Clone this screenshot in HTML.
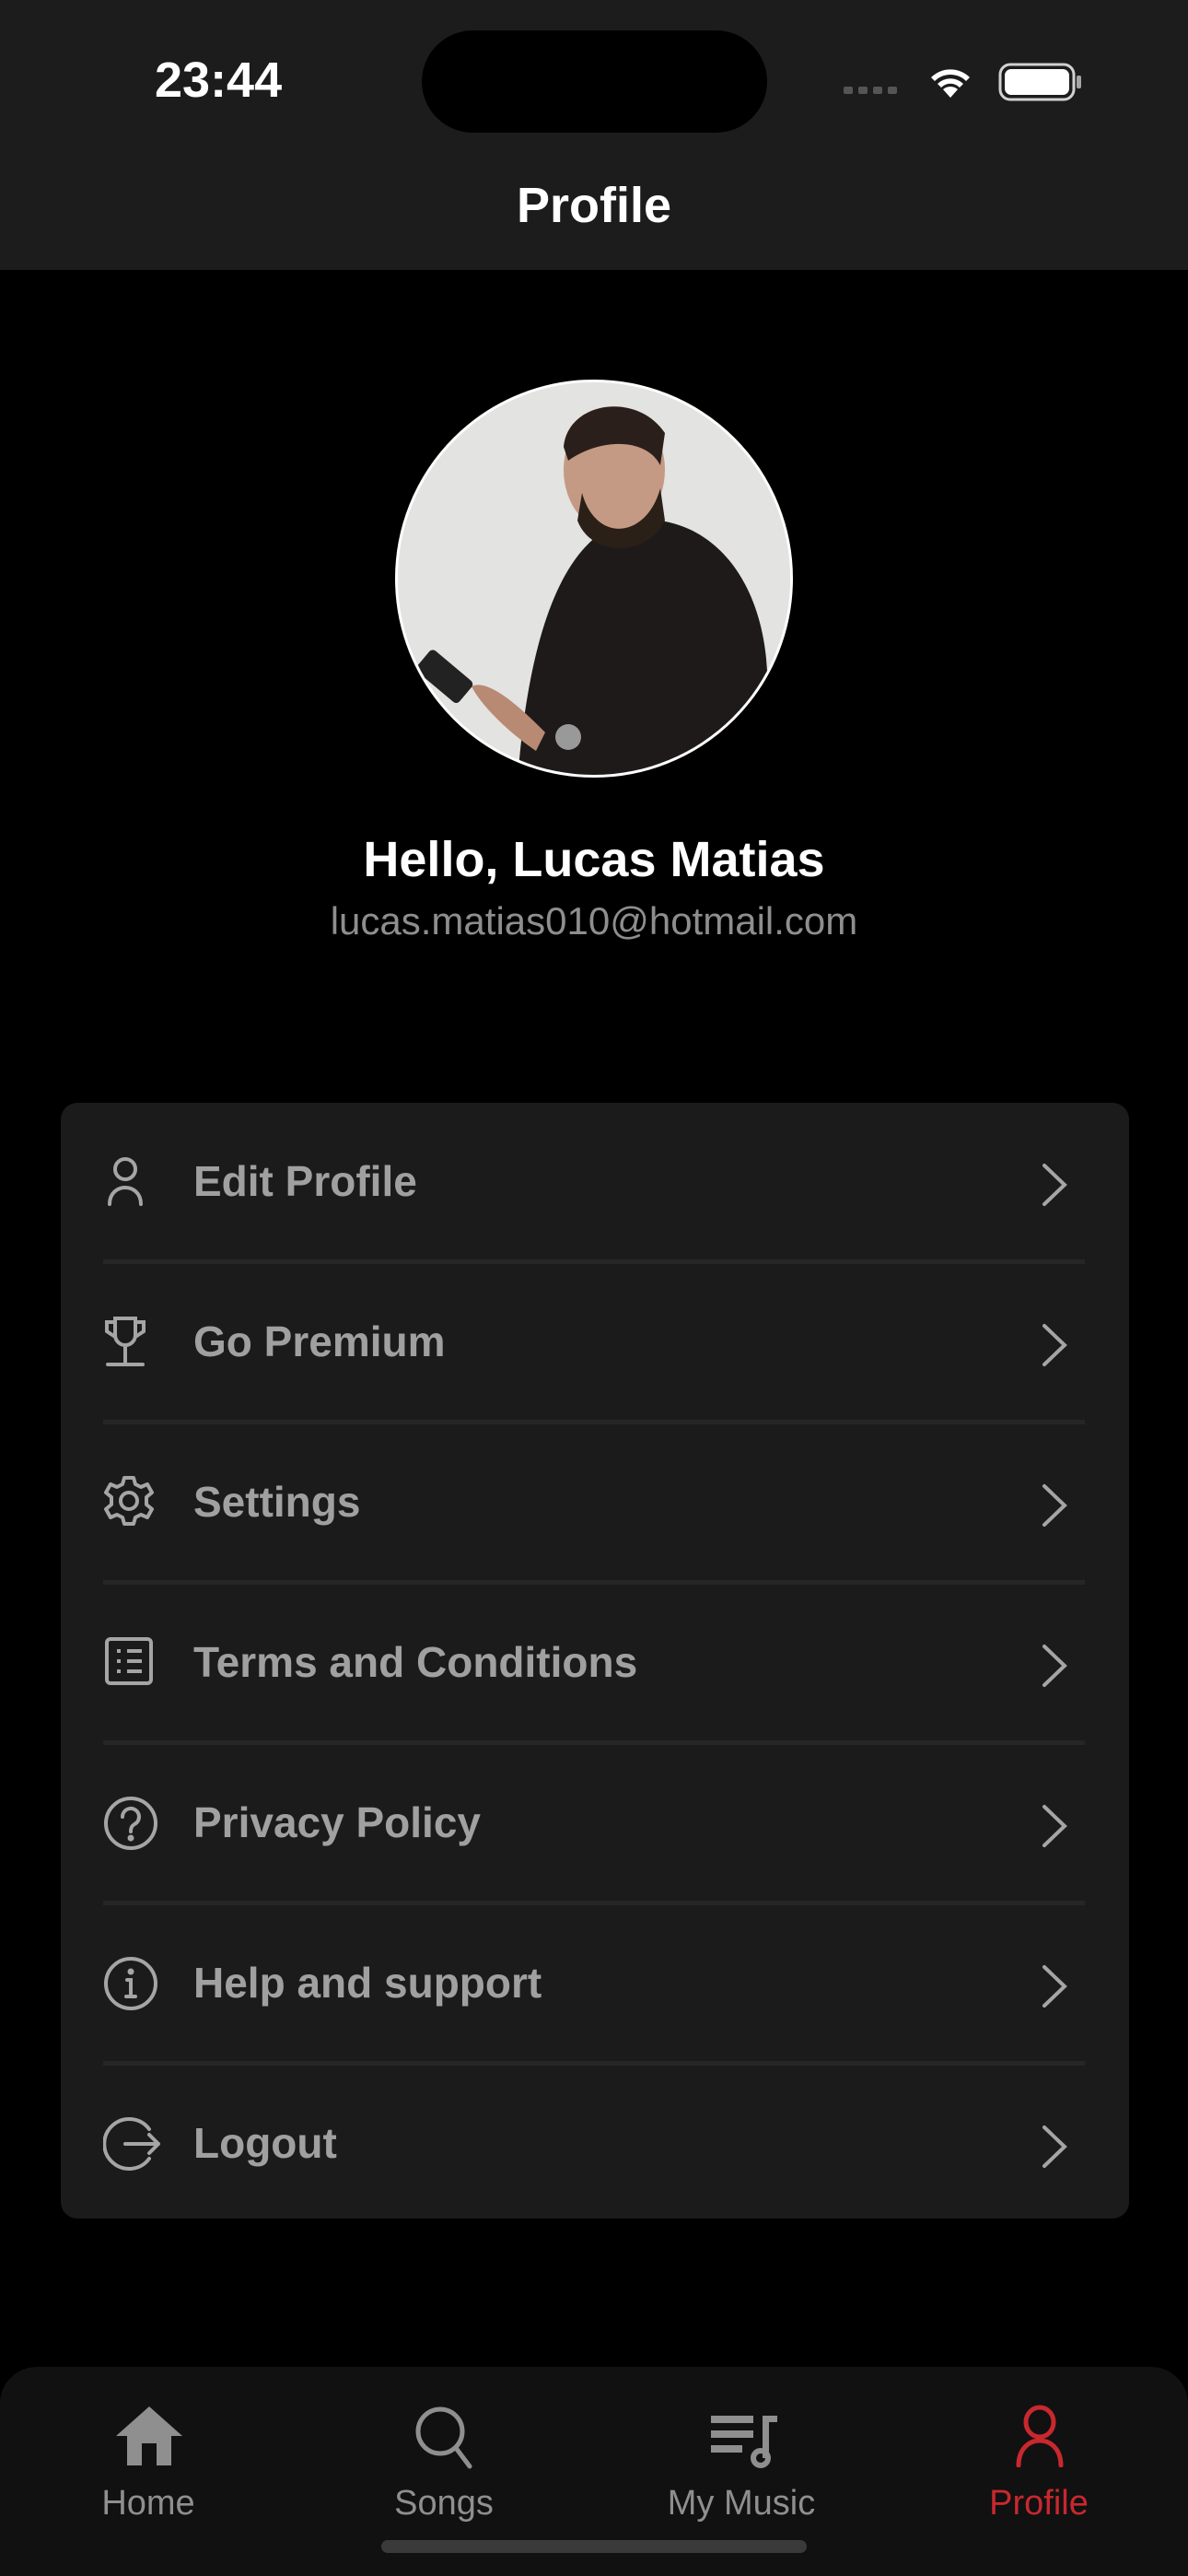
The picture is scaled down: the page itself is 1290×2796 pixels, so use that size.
<!DOCTYPE html>
<html><head><meta charset="utf-8"><style>
*{margin:0;padding:0;box-sizing:border-box}
body{width:1290px;height:2796px;background:#000;font-family:"Liberation Sans",sans-serif;position:relative;overflow:hidden;color:#fff}
.hdr{position:absolute;left:0;top:0;width:1290px;height:293px;background:#1c1c1c}
.time{position:absolute;left:168px;top:56px;font-size:54px;font-weight:bold}
.island{position:absolute;left:458px;top:33px;width:375px;height:111px;border-radius:56px;background:#000}
.title{position:absolute;left:0;width:1290px;top:192px;text-align:center;font-size:54px;font-weight:bold}
.av{position:absolute;left:429px;top:412px;width:432px;height:432px;border-radius:50%;border:3px solid #fff;overflow:hidden;background:#dedede}
.name{position:absolute;top:902px;width:1290px;text-align:center;font-size:54px;font-weight:bold}
.mail{position:absolute;top:976px;width:1290px;text-align:center;font-size:42px;color:#8e8e8e}
.card{position:absolute;left:66px;top:1197px;width:1160px;height:1211px;border-radius:18px;background:#1b1b1b}
.row{position:absolute;left:0;width:1160px;height:174px}
.row .t{position:absolute;left:144px;top:58px;font-size:46px;color:#a0a0a0;font-weight:bold}
.row svg.i{position:absolute;left:46px;top:56px}
.row svg.c{position:absolute;left:1060px;top:64px}
.div{position:absolute;left:46px;width:1066px;height:5px;background:#262626}
.tab{position:absolute;left:0;top:2569px;width:1290px;height:227px;background:#111;border-radius:40px 40px 0 0}
.lbl{position:absolute;top:2696px;font-size:38px;color:#8f8f8f;text-align:center;width:240px}
.bar{position:absolute;left:414px;top:2757px;width:462px;height:14px;border-radius:7px;background:#3a3a3a}
</style></head><body>
<div class="hdr"></div>
<div class="time">23:44</div>
<div class="island"></div>
<svg style="position:absolute;left:912px;top:64px" width="270" height="50" viewBox="0 0 270 50">
<g fill="#555"><rect x="4" y="30" width="10" height="8" rx="2"/><rect x="20" y="30" width="10" height="8" rx="2"/><rect x="36" y="30" width="10" height="8" rx="2"/><rect x="52" y="30" width="10" height="8" rx="2"/></g>
<g fill="#fff"><path d="M120 42 l-8 -9 a12 12 0 0 1 16 0z"/><path d="M106 27 a20 20 0 0 1 28 0 l-4 4 a14 14 0 0 0 -20 0z"/><path d="M99 20 a30 30 0 0 1 42 0 l-4 4 a24 24 0 0 0 -34 0z"/></g>
<rect x="174" y="6" width="80" height="38" rx="11" fill="none" stroke="#fff" stroke-width="3" opacity=".8"/>
<rect x="179" y="11" width="70" height="28" rx="7" fill="#fff"/><rect x="257" y="18" width="5" height="14" rx="2" fill="#fff" opacity=".6"/>
</svg>
<div class="title">Profile</div>
<div class="av"><svg width="432" height="432" viewBox="0 0 432 432">
<rect width="432" height="432" fill="#e3e3e1"/>
<path d="M130 432 C140 300 170 170 250 150 C330 140 390 200 400 300 L410 432Z" fill="#1f1a1a"/>
<ellipse cx="235" cy="95" rx="55" ry="68" fill="#c49a84"/>
<path d="M180 70 C185 20 260 10 290 55 L285 90 C270 60 220 60 185 85Z" fill="#2a1f1a"/>
<path d="M200 120 C215 175 270 170 285 115 L290 150 C270 190 210 190 195 150Z" fill="#2b2018"/>
<path d="M80 330 C100 320 140 360 160 380 L150 400 C120 380 90 350 80 330Z" fill="#b88a73"/>
<rect x="36" y="290" width="30" height="60" rx="5" transform="rotate(-50 50 320)" fill="#222"/>
<circle cx="185" cy="385" r="14" fill="#999"/>
</svg></div>
<div class="name">Hello, Lucas Matias</div>
<div class="mail">lucas.matias010@hotmail.com</div>
<div class="card">
<div class="row" style="top:0"><svg class="i" width="60" height="60" viewBox="0 0 60 60" fill="none" stroke="#a5a5a5" stroke-width="4" stroke-linecap="round"><circle cx="24" cy="16" r="11"/><path d="M7 54 C7 30 41 30 41 54"/></svg><div class="t">Edit Profile</div><svg class="c" width="40" height="50" viewBox="0 0 40 50" fill="none" stroke="#a5a5a5" stroke-width="4" stroke-linecap="round"><path d="M8 4 L30 25 L8 46"/></svg></div>
<div class="div" style="top:170px"></div>
<div class="row" style="top:174px"><svg class="i" width="60" height="60" viewBox="0 0 60 60" fill="none" stroke="#a5a5a5" stroke-width="4" stroke-linecap="round"><path d="M13 4 H35 V22 A11 11 0 0 1 13 22Z M13 8 H4 V18 L13 24 M35 8 H44 V18 L35 24 M24 33 V52 M5 54 H43"/></svg><div class="t">Go Premium</div><svg class="c" width="40" height="50" viewBox="0 0 40 50" fill="none" stroke="#a5a5a5" stroke-width="4" stroke-linecap="round"><path d="M8 4 L30 25 L8 46"/></svg></div>
<div class="div" style="top:344px"></div>
<div class="row" style="top:348px"><svg class="i" width="60" height="60" viewBox="0 0 60 60" fill="none" stroke="#a5a5a5" stroke-width="4" stroke-linejoin="round"><circle cx="28" cy="28" r="9"/><path d="M23 3 H33 L35 10 L41 13 L48 10 L53 19 L47 24 V32 L53 37 L48 46 L41 43 L35 46 L33 53 H23 L21 46 L15 43 L8 46 L3 37 L9 32 V24 L3 19 L8 10 L15 13 L21 10Z"/></svg><div class="t">Settings</div><svg class="c" width="40" height="50" viewBox="0 0 40 50" fill="none" stroke="#a5a5a5" stroke-width="4" stroke-linecap="round"><path d="M8 4 L30 25 L8 46"/></svg></div>
<div class="div" style="top:518px"></div>
<div class="row" style="top:522px"><svg class="i" width="60" height="60" viewBox="0 0 60 60" fill="none" stroke="#a5a5a5" stroke-width="4"><rect x="4" y="4" width="48" height="48" rx="4"/><path d="M15 17h4M26 17h16M15 28h4M26 28h16M15 39h4M26 39h16"/></svg><div class="t">Terms and Conditions</div><svg class="c" width="40" height="50" viewBox="0 0 40 50" fill="none" stroke="#a5a5a5" stroke-width="4" stroke-linecap="round"><path d="M8 4 L30 25 L8 46"/></svg></div>
<div class="div" style="top:692px"></div>
<div class="row" style="top:696px"><svg class="i" width="64" height="64" viewBox="0 0 64 64" fill="none" stroke="#a5a5a5" stroke-width="4" stroke-linecap="round"><circle cx="30" cy="30" r="27"/><path d="M21 23 a9 9 0 1 1 13 8 c-3 2 -4 4 -4 8"/><circle cx="30" cy="46" r="1.5" fill="#a5a5a5"/></svg><div class="t">Privacy Policy</div><svg class="c" width="40" height="50" viewBox="0 0 40 50" fill="none" stroke="#a5a5a5" stroke-width="4" stroke-linecap="round"><path d="M8 4 L30 25 L8 46"/></svg></div>
<div class="div" style="top:866px"></div>
<div class="row" style="top:870px"><svg class="i" width="64" height="64" viewBox="0 0 64 64" fill="none" stroke="#a5a5a5" stroke-width="4" stroke-linecap="round"><circle cx="30" cy="30" r="27"/><path d="M26 26h4v18M25 44h10"/><circle cx="30" cy="17" r="1.5" fill="#a5a5a5"/></svg><div class="t">Help and support</div><svg class="c" width="40" height="50" viewBox="0 0 40 50" fill="none" stroke="#a5a5a5" stroke-width="4" stroke-linecap="round"><path d="M8 4 L30 25 L8 46"/></svg></div>
<div class="div" style="top:1040px"></div>
<div class="row" style="top:1044px"><svg class="i" width="64" height="64" viewBox="0 0 64 64" fill="none" stroke="#a5a5a5" stroke-width="4" stroke-linecap="round" stroke-linejoin="round"><path d="M50 14 A27 27 0 1 0 50 46"/><path d="M24 30 H60 M50 20 L60 30 L50 40"/></svg><div class="t">Logout</div><svg class="c" width="40" height="50" viewBox="0 0 40 50" fill="none" stroke="#a5a5a5" stroke-width="4" stroke-linecap="round"><path d="M8 4 L30 25 L8 46"/></svg></div>
</div>
<div class="tab"></div>
<svg style="position:absolute;left:124px;top:2610px" width="76" height="68" viewBox="0 0 76 68"><path d="M38 2 L74 34 H62 V66 H46 V42 H30 V66 H14 V34 H2Z" fill="#8f8f8f"/></svg>
<svg style="position:absolute;left:450px;top:2612px" width="66" height="68" viewBox="0 0 66 68" fill="none" stroke="#8f8f8f" stroke-width="5" stroke-linecap="round"><circle cx="28" cy="27" r="24"/><path d="M45 45 L60 65"/></svg>
<svg style="position:absolute;left:770px;top:2618px" width="76" height="62" viewBox="0 0 76 62" fill="#8f8f8f"><rect x="2" y="4" width="46" height="8"/><rect x="2" y="20" width="46" height="8"/><rect x="2" y="36" width="34" height="8"/><rect x="58" y="4" width="16" height="7"/><rect x="58" y="4" width="7" height="46"/><circle cx="56" cy="50" r="8" fill="none" stroke="#8f8f8f" stroke-width="6"/></svg>
<svg style="position:absolute;left:1101px;top:2610px" width="56" height="68" viewBox="0 0 56 68" fill="none" stroke="#c8282e" stroke-width="5" stroke-linecap="round"><ellipse cx="28" cy="19" rx="15" ry="16"/><path d="M5 66 C5 30 51 30 51 66"/></svg>
<div class="lbl" style="left:41px">Home</div>
<div class="lbl" style="left:362px">Songs</div>
<div class="lbl" style="left:685px">My Music</div>
<div class="lbl" style="left:1008px;color:#c8282e">Profile</div>
<div class="bar"></div>
</body></html>
